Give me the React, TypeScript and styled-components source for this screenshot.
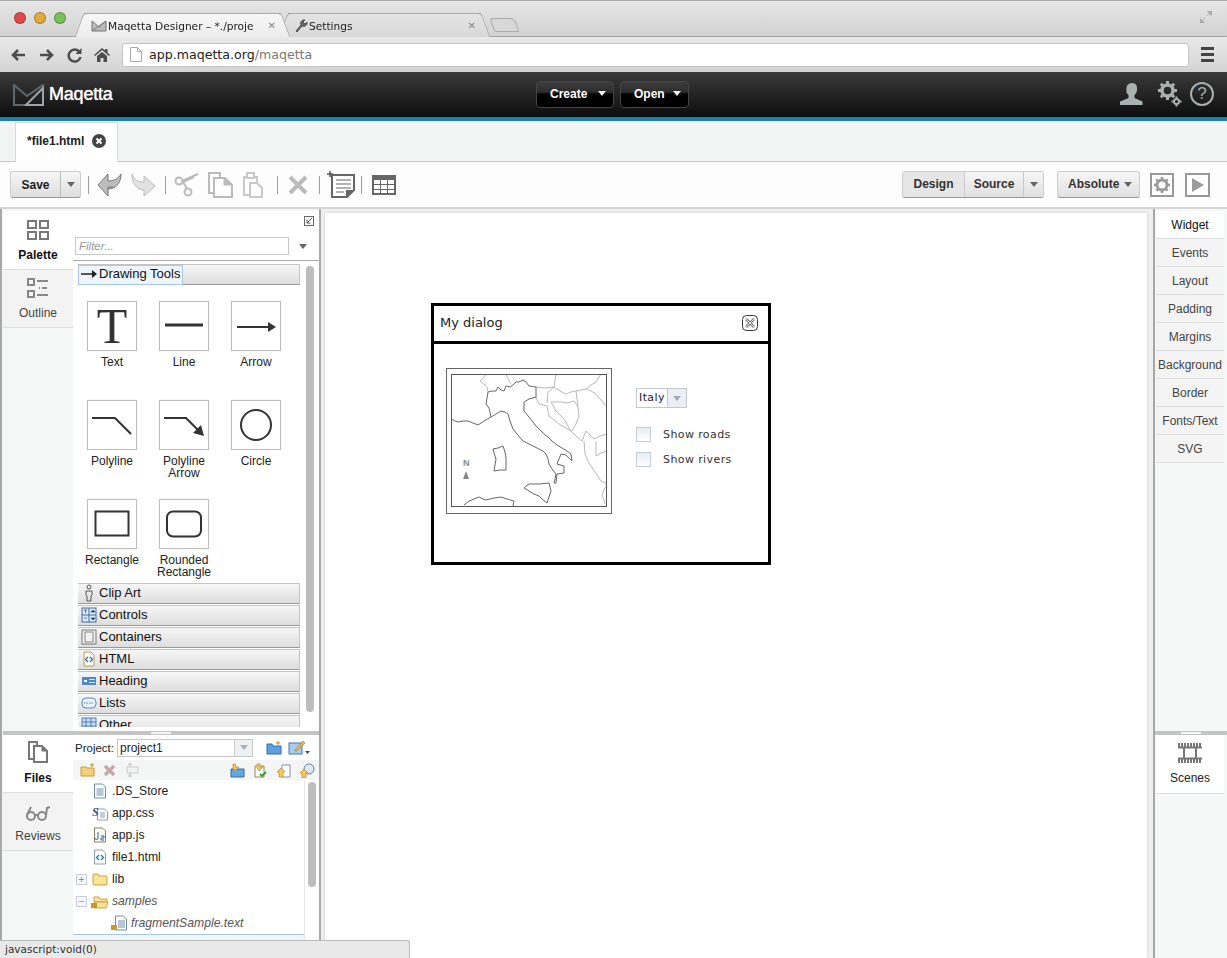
import React from "react"
import styled, { createGlobalStyle } from "styled-components"

const GlobalStyle = createGlobalStyle`
    html, body {
        margin: 0;
        padding: 0;
        overflow: hidden;
        background: #fff;
    }
    * {
        box-sizing: border-box;
    }
`

const SANS = `"Liberation Sans", Arial, sans-serif`
const LUCIDA = `"DejaVu Sans", Verdana, sans-serif`

const BigT = styled.span`
    font-family: "Liberation Serif", serif;
    font-size: 50px;
    line-height: 48px;
    color: #333;
`

const PALETTE_ITEMS: { label: string; shape: React.ReactNode }[] = [
    { label: "Text", shape: <BigT>T</BigT> },
    { label: "Line", shape: <svg width="48" height="48"><path d="M5 23H43" stroke="#333" strokeWidth="3" /></svg> },
    { label: "Arrow", shape: <svg width="48" height="48"><path d="M5 25H39" stroke="#333" strokeWidth="2" /><path d="M36 20l8 5-8 5z" fill="#333" /></svg> },
    { label: "Polyline", shape: <svg width="48" height="48"><path d="M4 17H27L43 33" stroke="#333" strokeWidth="2" fill="none" /></svg> },
    { label: "Polyline Arrow", shape: <svg width="48" height="48"><path d="M4 17H26L40 31" stroke="#333" strokeWidth="2" fill="none" /><path d="M44 35L33 32 41 24z" fill="#333" /></svg> },
    { label: "Circle", shape: <svg width="48" height="48"><circle cx="24" cy="24" r="15" stroke="#333" strokeWidth="2" fill="none" /></svg> },
    { label: "Rectangle", shape: <svg width="48" height="48"><rect x="7.5" y="11.5" width="33" height="24" stroke="#333" strokeWidth="2" fill="none" /></svg> },
    { label: "Rounded Rectangle", shape: <svg width="48" height="48"><rect x="7" y="11.5" width="34" height="25" rx="6" stroke="#333" strokeWidth="2" fill="none" /></svg> },
]

const SECTIONS: { label: string; icon: React.ReactNode }[] = [
    { label: "Clip Art", icon: <svg width="16" height="18"><circle cx="8" cy="3" r="2" fill="none" stroke="#555" /><path d="M5 7h6v4l-1 1v5H6v-5l-1-1z" fill="none" stroke="#555" /></svg> },
    { label: "Controls", icon: <svg width="16" height="16"><rect x="1" y="1" width="14" height="14" fill="#dfe8f5" stroke="#3c6aa8" /><path d="M8 1v14M1 8h14" stroke="#3c6aa8" /><path d="M3 3h3M4.5 3v3M3 11h3M10 5l2-2 2 2zM10 11h4l-2 2z" stroke="#24466f" fill="#24466f" strokeWidth=".7" /></svg> },
    { label: "Containers", icon: <svg width="16" height="16"><rect x="1" y="1" width="14" height="14" fill="#f2f2f2" stroke="#777" /><rect x="4" y="3" width="8" height="10" fill="none" stroke="#888" /></svg> },
    { label: "HTML", icon: <svg width="16" height="16"><path d="M3 1h7l3 3v11H3z" fill="#fff" stroke="#b89a45" /><path d="M7 6L4.500 8.500 7 11M9 6l2.500 2.500L9 11" stroke="#2f6fb5" fill="none" strokeWidth="1.300" /></svg> },
    { label: "Heading", icon: <svg width="16" height="16"><rect x="1" y="4" width="14" height="8" fill="#4f88c6" /><path d="M3 8h3" stroke="#fff" strokeWidth="2" /><path d="M8 6.500h6M8 9.500h6" stroke="#cfe0f2" /></svg> },
    { label: "Lists", icon: <svg width="16" height="16"><rect x="1" y="3" width="14" height="10" rx="4" fill="#eaf2fb" stroke="#5a87bb" /><path d="M3 8h10" stroke="#5a87bb" strokeDasharray="1.500 1" /></svg> },
]

const FILES: { name: string; icon: React.ReactNode }[] = [
    { name: ".DS_Store", icon: <svg width="14" height="16"><path d="M1.500 1h8l3 3v11h-11z" fill="#fff" stroke="#6e8db0" /><path d="M3.500 6h7M3.500 8h7M3.500 10h7M3.500 12h7" stroke="#6e8db0" /></svg> },
    { name: "app.css", icon: <svg width="16" height="16"><path d="M5.500 4h7l3 3v8h-10z" fill="#fff" stroke="#8a9db5" /><path d="M8 8h5M8 10h5M8 12h5" stroke="#8a9db5" /><text x="0" y="11" fontFamily="Liberation Serif, serif" fontSize="12" fontWeight="700" fontStyle="italic" fill="#2a5a96">S</text></svg> },
    { name: "app.js", icon: <svg width="14" height="16"><path d="M1.500 1h8l3 3v11h-11z" fill="#fff" stroke="#8a7f55" /><path d="M5 5v6a1.500 1.500 0 0 1-3 0M8 9h3v2H8v2h3" stroke="#2f5f9e" fill="none" /></svg> },
    { name: "file1.html", icon: <svg width="14" height="16"><path d="M1.500 1h8l3 3v11h-11z" fill="#fff" stroke="#8a9db5" /><path d="M6 6L3.500 8.500 6 11M8 6l2.500 2.500L8 11" stroke="#2f6fb5" fill="none" strokeWidth="1.300" /></svg> },
]

const PROPERTY_TABS = ["Widget", "Events", "Layout", "Padding", "Margins", "Background", "Border", "Fonts/Text", "SVG"]

const ClosedFolder = () => (
    <svg width="16" height="14"><path d="M1 3a1 1 0 0 1 1-1h4l1 2h7a1 1 0 0 1 1 1v7a1 1 0 0 1-1 1H2a1 1 0 0 1-1-1z" fill="#fbe39a" stroke="#c9a243" /></svg>
)

const Separator = styled.span<{ $gap: number }>`
    width: 1px;
    height: 18px;
    margin-left: ${(p) => p.$gap}px;
    background: #9a9a9a;
    flex: none;
`

const ToolIcon = styled.svg<{ $gap?: number }>`
    flex: none;
    margin-left: ${(p) => p.$gap ?? 0}px;
`

const Caret = ({ color = "#666" }: { color?: string }) => (
    <svg width="8" height="5"><path d="M0 0h8L4 5z" fill={color} /></svg>
)

const ItalyMap = () => (
    <svg width="154" height="131" viewBox="1 1 154 131">
        <g fill="none" stroke="#b8b8b8" strokeWidth="1">
            <path d="M35 0L32 4 29 7 33 10 36 13 37 18" />
            <path d="M55 0L57 5 60 10" />
            <path d="M85 13L94 14 103 13 105 0" />
            <path d="M103 13L109 17 115 20 120 18 125 17 130 16 135 15 140 11 145 8 150 0" />
            <path d="M135 15L140 17 145 20 150 26 156 33" />
            <path d="M103 13L97 18 96 29" />
            <path d="M85 23L88 30 92 31 96 32 98 42 108 50 120 57 125 62 131 67" />
            <path d="M100 28H111L116 29 123 27 127 33 128 42 125 50 121 57" />
            <path d="M100 28L105 37 113 45 120 57" />
            <path d="M125 17L126 25 127 33" />
            <path d="M131 67L135 57 143 65 149 62 156 60" />
            <path d="M133 67L134 80 138 89 144 98 150 107 156 110" />
            <path d="M145 67V82L150 79 156 77" />
            <path d="M156 112L153 115 151 122 153 126 154 130" />
        </g>
        <g fill="none" stroke="#666" strokeWidth="1">
            <path d="M0 45L4 47 7 48 12 47 17 47 22 49 27 51 33 47 40 43 45 40 50 37 54 38 57 40 59 47 62 55 66 60 72 67 78 70 84 73 88 75 92 77 95 80 97 85 98 90 101 95 105 100 104 105 103 109 105 109 106 100 113 99 113 92 106 90 108 85 110 80 115 81 118 84 121 87 120 80 116 77 111 74 106 71 101 67 97 63 93 60 89 56 85 52 82 48 78 43 73 37 73 28 78 25 85 23 85 13 78 12 75 8 72 6 68 8 65 8 62 11 59 13 55 12 53 17 50 16 47 13 45 17 41 17 37 18 36 24 35 30 38 34 39 38 40 43" />
            <path d="M78 110L88 110 98 109 100 117 98 123 96 129 91 125 88 122 83 120 78 117 75 115 73 114 75 112z" />
            <path d="M42 75L47 74 52 72 54 78 55 84V90L55 96 49 96 43 97 44 91 45 85 43 79z" />
            <path d="M13 131L18 127 23 125 28 123 32 125 35 126 43 124 50 123 56 125 63 127 62 132" />
        </g>
        <NorthLabel x="12" y="92">N</NorthLabel>
        <path d="M15 97l-3 8h6z" fill="#888" />
    </svg>
)

export default function App() {
    return (
        <Screen>
            <GlobalStyle />
            <BrowserTabs>
                <Lights>
                    <Light $color="#e0494a" />
                    <Light $color="#e3aa3c" />
                    <Light $color="#78c05a" />
                </Lights>
                <BrowserTab $active $width={197}>
                    <svg width="16" height="12"><path d="M1 1l7 6 7-6v10H1z" fill="#bbb" stroke="#777" /><path d="M1 11L15 1" stroke="#777" /></svg>
                    <BrowserTabTitle>Maqetta Designer – *./proje</BrowserTabTitle>
                    <BrowserTabClose>✕</BrowserTabClose>
                </BrowserTab>
                <BrowserTab $width={193}>
                    <svg width="13" height="14"><path d="M1 12L6 6a3.500 3.500 0 0 1 4-5L8 3l2 2 2-2a3.500 3.500 0 0 1-5 4l-5 6z" fill="#666" stroke="#555" /></svg>
                    <BrowserTabTitle>Settings</BrowserTabTitle>
                    <BrowserTabClose>✕</BrowserTabClose>
                </BrowserTab>
                <NewTab />
                <FullScreen>
                    <svg width="12" height="12"><path d="M7 0h5v5zM0 12V7l5 5z" fill="#aaa" /><path d="M10 2L7 5M2 10l3-3" stroke="#aaa" /></svg>
                </FullScreen>
            </BrowserTabs>
            <AddressRow>
                <svg width="17" height="16"><path d="M15 8H3M8 3L3 8l5 5" stroke="#4d4d4d" strokeWidth="2.500" fill="none" /></svg>
                <svg width="17" height="16"><path d="M2 8h12M9 3l5 5-5 5" stroke="#4d4d4d" strokeWidth="2.500" fill="none" /></svg>
                <svg width="17" height="16"><path d="M13.500 5A6 6 0 1 0 14.500 10" stroke="#4d4d4d" strokeWidth="2.500" fill="none" /><path d="M15.500 1v6h-6z" fill="#4d4d4d" /></svg>
                <svg width="17" height="16"><path d="M0 8l8-7 3 2.600V2h2.500v3.800L16 8l-1 1-7-6-7 6z" fill="#4d4d4d" /><path d="M3 9l5-4 5 4v6H9.500v-4h-3v4H3z" fill="#4d4d4d" /></svg>
                <UrlBar>
                    <svg width="12" height="15"><path d="M.5.500h7l4 4v10H.5z" fill="#fff" stroke="#aaa" /><path d="M7.500.500v4h4" fill="none" stroke="#aaa" /></svg>
                    <UrlHost>app.maqetta.org</UrlHost>
                    <UrlPath>/maqetta</UrlPath>
                </UrlBar>
                <MenuBars>
                    <span />
                    <span />
                    <span />
                </MenuBars>
            </AddressRow>
            <AppHeader>
                <Logo>
                    <svg width="32" height="22">
                        <path d="M1 1L14 12 30 1V21H1z" fill="none" stroke="#5d686e" strokeWidth="2" />
                        <path d="M13 21L30 4v17z" fill="none" stroke="#9aa5aa" strokeWidth="2" />
                    </svg>
                    <LogoText>Maqetta</LogoText>
                </Logo>
                <HeaderCenter>
                    <HeaderButton $width={78}>Create<Caret color="#eee" /></HeaderButton>
                    <HeaderButton $width={69}>Open<Caret color="#eee" /></HeaderButton>
                </HeaderCenter>
                <HeaderIcons>
                    <UserIcon width="26" height="24"><path d="M13 1c4 0 5.500 3 5 7-.3 2-1 4-2.500 5v3l8 3.500V23H1v-3.500L9.500 16v-3C8 12 7 10 7.500 8 7 4 9 1 13 1z" fill="#a9b2b0" /></UserIcon>
                    <svg width="24" height="26">
                        <g fill="none" stroke="#a9b0ae">
                            <circle cx="9.500" cy="9.500" r="5.500" strokeWidth="3.500" />
                            <path d="M9.500 0v3.500M9.500 15.500V19M0 9.500h3.500M15.500 9.500H19M2.800 2.800l2.500 2.500M13.700 13.700l2.500 2.500M2.800 16.200l2.500-2.500M13.700 5.300l2.500-2.500" strokeWidth="3" />
                            <circle cx="18.500" cy="20.500" r="2.500" strokeWidth="2" />
                            <path d="M18.500 15.500v2M18.500 23.500v2M13.500 20.500h2M21.500 20.500h2" strokeWidth="2" />
                        </g>
                    </svg>
                    <HelpCircle>?</HelpCircle>
                </HeaderIcons>
            </AppHeader>
            <BlueRule />
            <EditorTabs>
                <EditorTab>
                    *file1.html
                    <CloseDot>
                        <svg width="14" height="14"><circle cx="7" cy="7" r="7" fill="#444" /><path d="M4.500 4.500l5 5M9.500 4.500l-5 5" stroke="#fff" strokeWidth="2" /></svg>
                    </CloseDot>
                </EditorTab>
            </EditorTabs>
            <Toolbar>
                <ToolbarLeft>
                    <SplitButton>
                        <SaveLabel>Save</SaveLabel>
                        <CaretCell><Caret /></CaretCell>
                    </SplitButton>
                    <Separator $gap={7} />
                    <ToolIcon width="25" height="26" viewBox="0 0 25 26" $gap={8}>
                        <path d="M11 2L1 13l10 11v-7c7 0 13-5 13-15-3 5-7 7-13 7z" fill="#bdbdbd" stroke="#777" />
                        <path d="M11 24v-7c3 0 5-1 7-2l-5-1-3 1z" fill="#8f8f8f" />
                    </ToolIcon>
                    <ToolIcon width="25" height="26" viewBox="0 0 25 26" $gap={9}>
                        <path d="M1 2c2 6 6 8 12 8V4l11 10-11 10v-6C6 18 1 12 1 2z" fill="#e2e2e2" stroke="#bbb" />
                    </ToolIcon>
                    <Separator $gap={9} />
                    <ToolIcon width="25" height="27" viewBox="0 0 25 27" $gap={8}>
                        <g fill="none" stroke="#bbb" strokeWidth="2">
                            <circle cx="5" cy="10" r="3.500" />
                            <circle cx="14" cy="21" r="3.500" />
                            <path d="M8 10L24 3M13 18L9 11 20 6" />
                        </g>
                    </ToolIcon>
                    <ToolIcon width="25" height="27" viewBox="0 0 25 27" $gap={9}>
                        <g fill="#fff" stroke="#bbb" strokeWidth="2">
                            <path d="M1 2h11v20H1z" />
                            <path d="M6 7h11l7 7v12H6z" />
                        </g>
                        <path d="M16 7v7h8" fill="#bbb" stroke="#bbb" />
                    </ToolIcon>
                    <ToolIcon width="20" height="27" viewBox="0 0 20 27" $gap={10}>
                        <g fill="#fff" stroke="#c8c8c8" strokeWidth="2">
                            <path d="M1 6h13v18H1z" />
                            <path d="M4 2h7v5H4z" />
                            <path d="M7 12h7l5 5v9H7z" />
                        </g>
                    </ToolIcon>
                    <Separator $gap={14} />
                    <ToolIcon width="20" height="20" viewBox="0 0 20 20" $gap={10}>
                        <path d="M2 2l16 16M18 2L2 18" stroke="#bbb" strokeWidth="4" />
                    </ToolIcon>
                    <Separator $gap={11} />
                    <ToolIcon width="28" height="28" viewBox="0 0 28 28" $gap={7}>
                        <path d="M3 6v-6M0 3h6" stroke="#555" strokeWidth="1.500" />
                        <path d="M5 4h22v15l-7 7H5z" fill="#fff" stroke="#666" strokeWidth="2" />
                        <path d="M9 9h15M9 13h15M9 17h15M9 21h8" stroke="#666" />
                        <path d="M19 26v-7h8z" fill="#666" />
                    </ToolIcon>
                    <Separator $gap={6} />
                    <ToolIcon width="24" height="20" viewBox="0 0 24 20" $gap={10}>
                        <rect x="1" y="1" width="22" height="18" fill="#fff" stroke="#666" strokeWidth="2" />
                        <path d="M1 3h22M1 4h22" stroke="#666" strokeWidth="2" />
                        <path d="M1 9.500h22M1 14.500h22M8.500 2v16M15.500 2v16" stroke="#666" />
                    </ToolIcon>
                </ToolbarLeft>
                <ToolbarRight>
                    <ButtonGroup>
                        <GroupButton $active $width={61}>Design</GroupButton>
                        <GroupButton $width={59}>Source</GroupButton>
                        <GroupButton $width={20}><Caret /></GroupButton>
                    </ButtonGroup>
                    <AbsoluteButton>Absolute<Caret /></AbsoluteButton>
                    <BoxIcon $width={24}>
                        <svg width="16" height="16"><circle cx="8" cy="8" r="5" fill="none" stroke="#9a9a9a" strokeWidth="3" /><path d="M8 0v3M8 13v3M0 8h3M13 8h3M2.300 2.300l2 2M11.700 11.700l2 2M2.300 13.700l2-2M11.700 4.300l2-2" stroke="#9a9a9a" strokeWidth="2.500" /></svg>
                    </BoxIcon>
                    <BoxIcon $width={25} $gapLeft={11}>
                        <svg width="14" height="16"><path d="M1 1l12 7-12 7z" fill="#9a9a9a" /></svg>
                    </BoxIcon>
                </ToolbarRight>
            </Toolbar>
            <Workspace>
                <LeftColumn>
                    <PalettePane>
                        <SideTabs>
                            <SideTab $active $height={59}>
                                <svg width="22" height="20"><g fill="none" stroke="#777" strokeWidth="2"><rect x="1" y="1" width="8" height="7" /><rect x="13" y="1" width="8" height="7" /><rect x="1" y="12" width="8" height="7" /><rect x="13" y="12" width="8" height="7" /></g></svg>
                                Palette
                            </SideTab>
                            <SideTab $height={58}>
                                <svg width="22" height="20"><g fill="none" stroke="#888" strokeWidth="2"><rect x="1" y="1" width="6" height="6" /><rect x="1" y="13" width="6" height="6" /></g><path d="M10 3h11M12 10h1M15 10h5M10 17h11" stroke="#888" strokeWidth="2" /></svg>
                                Outline
                            </SideTab>
                        </SideTabs>
                        <PaletteBody>
                            <PaletteTop>
                                <svg width="10" height="10"><rect x=".5" y=".5" width="9" height="9" fill="#fff" stroke="#666" /><path d="M8 2L3 7M3 3.500V7h3.500" stroke="#555" fill="none" /></svg>
                            </PaletteTop>
                            <FilterRow>
                                <FilterInput>Filter...</FilterInput>
                                <Caret />
                            </FilterRow>
                            <PaletteScroll>
                                <PaletteList>
                                    <SectionHeader>
                                        <SectionFocus>
                                            <svg width="18" height="12"><path d="M1 6h13" stroke="#222" strokeWidth="1.500" /><path d="M12 2l5 4-5 4z" fill="#222" /></svg>
                                            Drawing Tools
                                        </SectionFocus>
                                    </SectionHeader>
                                    <ItemGrid>
                                        {PALETTE_ITEMS.map((item) => (
                                            <Item key={item.label}>
                                                <ItemBox>{item.shape}</ItemBox>
                                                <ItemLabel>{item.label}</ItemLabel>
                                            </Item>
                                        ))}
                                    </ItemGrid>
                                    {SECTIONS.map((section) => (
                                        <SectionHeader key={section.label}>
                                            <SectionIcon>{section.icon}</SectionIcon>
                                            {section.label}
                                        </SectionHeader>
                                    ))}
                                    <SectionHeader>
                                        <SectionIcon>
                                            <svg width="16" height="16"><rect x="1" y="1" width="14" height="14" fill="#cddff2" stroke="#4f7fb5" /><path d="M1 5h14M1 9h14M5 1v14M10 1v14" stroke="#4f7fb5" /></svg>
                                        </SectionIcon>
                                        Other
                                    </SectionHeader>
                                </PaletteList>
                                <ScrollTrack $gap={6}>
                                    <ScrollThumb $height={446} />
                                </ScrollTrack>
                            </PaletteScroll>
                        </PaletteBody>
                    </PalettePane>
                    <Splitter><SplitterGrip /></Splitter>
                    <FilesPane>
                        <SideTabs>
                            <SideTab $active $height={58}>
                                <svg width="22" height="22"><path d="M2 1h8v17H2z" fill="none" stroke="#777" strokeWidth="2" /><path d="M7 5h8l5 5v11H7z" fill="#fff" stroke="#777" strokeWidth="2" /><path d="M15 5v5h5" fill="#777" stroke="#777" /></svg>
                                Files
                            </SideTab>
                            <SideTab $height={58}>
                                <svg width="26" height="16"><g fill="none" stroke="#888" strokeWidth="2"><circle cx="6" cy="11" r="4" /><circle cx="17" cy="11" r="4" /><path d="M10 10h3M2 10L6 2M21 10l1-7 3-1" /></g></svg>
                                Reviews
                            </SideTab>
                        </SideTabs>
                        <FilesBody>
                            <ProjectRow>
                                Project:
                                <ProjectSelect>
                                    <ProjectValue>project1</ProjectValue>
                                    <ProjectCaret><Caret color="#9db4d0" /></ProjectCaret>
                                </ProjectSelect>
                                <ProjectActions>
                                    <svg width="16" height="14"><path d="M1 3h5l1 2h8v8H1z" fill="#5f9fe0" stroke="#2f6cb0" /><path d="M12 0v4M10 2h4" stroke="#c98a2b" /></svg>
                                    <svg width="22" height="15"><rect x="1" y="3" width="13" height="11" fill="#a8cdf0" stroke="#3f78b5" /><path d="M7 10L15 1l2 2-8 8-2 0z" fill="#e8b64a" stroke="#a07a20" strokeWidth=".6" /><path d="M17 11h5l-2.500 3z" fill="#3a4f6a" /></svg>
                                </ProjectActions>
                            </ProjectRow>
                            <ActionRow>
                                <ActionGroup>
                                    <svg width="15" height="14"><path d="M1 4h5l1 1h7v8H1z" fill="#f6cf7a" stroke="#c99a3a" /><path d="M12 0v4M10 2h4" stroke="#d88a20" /></svg>
                                    <svg width="13" height="13"><path d="M2 2l9 9M11 2l-9 9" stroke="#c9a8a8" strokeWidth="3.500" /></svg>
                                    <svg width="15" height="14"><path d="M6 1v12M4 1h4M4 13h4" stroke="#bbb" /><rect x="3" y="4" width="11" height="6" fill="#f2f2f2" stroke="#ccc" /></svg>
                                </ActionGroup>
                                <ActionGroup>
                                    <svg width="15" height="15"><path d="M1 6h13v8H1z" fill="#6aa5e0" stroke="#2f6cb0" /><path d="M3 1h2.500v3H9L5 8 3 5z" fill="#f3c95f" stroke="#b98a20" strokeWidth=".7" /></svg>
                                    <svg width="15" height="15"><path d="M2 3h9v11H2z" fill="#fff" stroke="#998a55" /><path d="M4 1h3v3h3L6 8 4 5z" fill="#f3c95f" stroke="#b98a20" strokeWidth=".7" /><path d="M7 11l2 2 4-4" stroke="#2e9a3a" fill="none" strokeWidth="1.800" /></svg>
                                    <svg width="15" height="15"><path d="M6 2h8v12H6z" fill="#fff" stroke="#7d93b3" /><path d="M1 9l4-4 4 4H7v5H3V9z" fill="#f3c95f" stroke="#b98a20" strokeWidth=".7" /></svg>
                                    <svg width="16" height="15"><circle cx="10" cy="6" r="5" fill="#dfe9f5" stroke="#5f7fa8" /><path d="M1 10l4-4 4 4H7v5H3v-5z" fill="#f3c95f" stroke="#b98a20" strokeWidth=".7" /></svg>
                                </ActionGroup>
                            </ActionRow>
                            <TreeArea>
                                <TreeList>
                                    {FILES.map((file) => (
                                        <TreeRow key={file.name} $indent={16}>
                                            <TreeIcon>{file.icon}</TreeIcon>
                                            {file.name}
                                        </TreeRow>
                                    ))}
                                    <TreeRow $indent={0}>
                                        <Expander>+</Expander>
                                        <TreeIcon><ClosedFolder /></TreeIcon>
                                        lib
                                    </TreeRow>
                                    <TreeRow $indent={0} $muted>
                                        <Expander>−</Expander>
                                        <TreeIcon>
                                            <svg width="18" height="15"><path d="M3 3h5l1 2h7v3H3z" fill="#fbe39a" stroke="#c9a243" /><path d="M4 8h13l-2 6H3z" fill="#fbe39a" stroke="#c9a243" /><rect x="0" y="9" width="6" height="5" fill="#c9982a" /></svg>
                                        </TreeIcon>
                                        samples
                                    </TreeRow>
                                    <TreeRow $indent={35} $muted>
                                        <TreeIcon>
                                            <svg width="17" height="16"><path d="M4.500 1h8l3 3v11h-11z" fill="#fff" stroke="#6e8db0" /><path d="M7 6h7M7 8h7M7 10h7M7 12h7" stroke="#6e8db0" /><rect x="0" y="10" width="6" height="5" fill="#c9982a" /></svg>
                                        </TreeIcon>
                                        fragmentSample.text
                                    </TreeRow>
                                    <SelectedRow />
                                </TreeList>
                                <ScrollTrack $gap={3}>
                                    <ScrollThumb $height={105} />
                                </ScrollTrack>
                            </TreeArea>
                        </FilesBody>
                    </FilesPane>
                </LeftColumn>
                <CanvasGutter>
                    <Canvas>
                        <Dialog>
                            <DialogTitle>
                                My dialog
                                <svg width="16" height="16"><rect x=".5" y=".5" width="15" height="15" rx="4" fill="#fff" stroke="#333" /><path d="M4 4l8 8M12 4l-8 8" stroke="#777" strokeWidth="2.500" /><path d="M4 4l8 8M12 4l-8 8" stroke="#fff" strokeWidth=".8" /></svg>
                            </DialogTitle>
                            <DialogBody>
                                <MapFrame>
                                    <MapInner>
                                        <ItalyMap />
                                    </MapInner>
                                </MapFrame>
                                <DialogControls>
                                    <ComboBox>
                                        <ComboValue>Italy</ComboValue>
                                        <ComboArrow><Caret color="#a0a8c0" /></ComboArrow>
                                    </ComboBox>
                                    <CheckRow>
                                        <CheckBox />
                                        Show roads
                                    </CheckRow>
                                    <CheckRow>
                                        <CheckBox />
                                        Show rivers
                                    </CheckRow>
                                </DialogControls>
                            </DialogBody>
                        </Dialog>
                    </Canvas>
                </CanvasGutter>
                <RightColumn>
                    <PropertyPane>
                        {PROPERTY_TABS.map((label, i) => (
                            <PropertyTab key={label} $active={i === 0}>{label}</PropertyTab>
                        ))}
                    </PropertyPane>
                    <Splitter><SplitterGrip /></Splitter>
                    <ScenesPane>
                        <ScenesTab>
                            <svg width="24" height="20"><path d="M0 2h24M0 18h24" stroke="#777" strokeWidth="4" strokeDasharray="2 1" /><path d="M0 4.500h24M0 15.500h24M6 5v10M18 5v10" stroke="#777" strokeWidth="2" /></svg>
                            Scenes
                        </ScenesTab>
                    </ScenesPane>
                </RightColumn>
            </Workspace>
            <StatusBubble>javascript:void(0)</StatusBubble>
        </Screen>
    )
}

const Screen = styled.div`
    position: relative;
    width: 1227px;
    height: 958px;
    overflow: hidden;
    display: flex;
    flex-direction: column;
    font-family: ${SANS};
    background: #fff;
`

const BrowserTabs = styled.div`
    height: 37px;
    flex: none;
    display: flex;
    align-items: flex-end;
    padding: 0 15px 0 14px;
    background: linear-gradient(#e6e6e6, #d2d2d2);
    border-top: 1px solid #aaa;
    border-bottom: 1px solid #a4a4a4;
`

const Lights = styled.div`
    display: flex;
    gap: 8px;
    align-self: center;
    margin-right: 11px;
    margin-top: -2px;
`

const Light = styled.span<{ $color: string }>`
    width: 12px;
    height: 12px;
    border-radius: 50%;
    background: ${(p) => p.$color};
    border: 1px solid rgba(0, 0, 0, 0.25);
`

const BrowserTab = styled.div<{ $active?: boolean; $width: number }>`
    position: relative;
    z-index: ${(p) => (p.$active ? 2 : 1)};
    width: ${(p) => p.$width}px;
    height: 24px;
    flex: none;
    display: flex;
    align-items: center;
    gap: 1px;
    padding: 0 5px 0 7px;
    margin-left: 7px;
    margin-bottom: -1px;
    border-top: 1px solid #a8a8a8;
    background: ${(p) => (p.$active ? "linear-gradient(#f7f7f7, #ececec)" : "linear-gradient(#e4e4e4, #d8d8d8)")};
    font-family: ${LUCIDA};
    font-size: 10.6px;
    color: #222;

    &::before,
    &::after {
        content: "";
        position: absolute;
        z-index: -1;
        top: -1px;
        bottom: 0;
        width: 18px;
        border-top: 1px solid #a8a8a8;
        background: inherit;
    }
    &::before {
        left: -5px;
        border-left: 1px solid #a8a8a8;
        border-top-left-radius: 4px;
        transform: skewX(-20deg);
    }
    &::after {
        right: -5px;
        border-right: 1px solid #a8a8a8;
        border-top-right-radius: 4px;
        transform: skewX(20deg);
    }
`

const BrowserTabTitle = styled.span`
    flex: 1;
    overflow: hidden;
    white-space: nowrap;
    mask-image: linear-gradient(to right, #000 92%, transparent);
`

const BrowserTabClose = styled.span`
    font-size: 10px;
    color: #888;
`

const NewTab = styled.div`
    width: 25px;
    height: 14px;
    margin: 0 0 4px 11px;
    border: 1px solid #aaa;
    border-radius: 3px 5px 2px 2px;
    transform: skewX(20deg);
    background: #d8d8d8;
`

const FullScreen = styled.div`
    margin-left: auto;
    align-self: center;
    margin-top: -2px;
`

const AddressRow = styled.div`
    height: 35px;
    flex: none;
    display: flex;
    align-items: center;
    gap: 11px;
    padding: 0 13px 0 10px;
    background: linear-gradient(#e9e9e9, #d4d4d4);
`

const UrlBar = styled.div`
    flex: 1;
    height: 24px;
    display: flex;
    align-items: center;
    padding-left: 7px;
    margin-right: 1px;
    background: #fff;
    border: 1px solid #c4c4c4;
    border-radius: 3px;
    font-family: ${LUCIDA};
    font-size: 12.6px;
    svg {
        margin-right: 7px;
    }
`

const UrlHost = styled.span`
    color: #222;
`

const UrlPath = styled.span`
    color: #777;
`

const MenuBars = styled.div`
    display: flex;
    flex-direction: column;
    gap: 3px;
    span {
        width: 13px;
        height: 3px;
        background: #444;
    }
`

const AppHeader = styled.div`
    height: 45px;
    flex: none;
    display: flex;
    align-items: center;
    padding: 0 13px;
    background: linear-gradient(#3a3a3a, #0d0d0d);
`

const Logo = styled.div`
    width: 523px;
    display: flex;
    align-items: center;
    gap: 4px;
`

const LogoText = styled.span`
    color: #fff;
    font-size: 18px;
    letter-spacing: -0.2px;
    text-shadow: 0 0 1px #fff;
`

const HeaderCenter = styled.div`
    display: flex;
    gap: 6px;
`

const HeaderButton = styled.div<{ $width: number }>`
    width: ${(p) => p.$width}px;
    height: 27px;
    display: flex;
    align-items: center;
    justify-content: space-between;
    padding: 0 7px 2px 13px;
    border-radius: 4px;
    border: 1px solid #444;
    background: linear-gradient(#3c3c3c, #2d2d2d 40%, #000 50%, #000);
    color: #fff;
    font-size: 12px;
    font-weight: 700;
`

const HeaderIcons = styled.div`
    margin-left: auto;
    margin-top: -2px;
    display: flex;
    align-items: center;
    gap: 8px;
`

const UserIcon = styled.svg`
    margin-right: 5px;
`

const HelpCircle = styled.span`
    width: 24px;
    height: 24px;
    border: 2px solid #a9b0ae;
    border-radius: 50%;
    display: flex;
    align-items: center;
    justify-content: center;
    color: #a9b0ae;
    font-size: 17px;
`

const BlueRule = styled.div`
    height: 4px;
    flex: none;
    background: #1a80ac;
`

const EditorTabs = styled.div`
    height: 41px;
    flex: none;
    padding: 1px 0 0 15px;
    background: #f2f4f3;
    border-bottom: 1px solid #c9c9c9;
`

const EditorTab = styled.div`
    width: 103px;
    height: 40px;
    display: flex;
    align-items: center;
    padding: 0 0 4px 11px;
    background: #fff;
    border: 1px solid #d8d8d8;
    border-bottom: none;
    font-size: 12px;
    font-weight: 700;
    color: #222;
`

const CloseDot = styled.span`
    display: flex;
    margin-left: 8px;
`

const Toolbar = styled.div`
    height: 47px;
    flex: none;
    display: flex;
    align-items: center;
    justify-content: space-between;
    padding: 0 17px 0 10px;
    background: #fdfdfd;
    border-bottom: 2px solid #d4d4d4;
`

const ToolbarLeft = styled.div`
    display: flex;
    align-items: center;
`

const ToolbarRight = styled.div`
    display: flex;
    align-items: center;
    margin-top: -1px;
`

const SplitButton = styled.div`
    width: 71px;
    height: 27px;
    display: flex;
    border: 1px solid #ccc;
    border-bottom-color: #999;
    border-radius: 3px;
    background: linear-gradient(#f6f6f6, #dedede);
    font-size: 12px;
    font-weight: 700;
    color: #222;
`

const SaveLabel = styled.span`
    flex: 1;
    display: flex;
    align-items: center;
    justify-content: center;
`

const CaretCell = styled.span`
    width: 20px;
    display: flex;
    align-items: center;
    justify-content: center;
    border-left: 1px solid #bbb;
`

const ButtonGroup = styled.div`
    display: flex;
    height: 27px;
    border: 1px solid #ccc;
    border-bottom-color: #999;
    border-radius: 3px;
    overflow: hidden;
`

const GroupButton = styled.div<{ $active?: boolean; $width: number }>`
    width: ${(p) => p.$width}px;
    display: flex;
    align-items: center;
    justify-content: center;
    font-size: 12px;
    font-weight: 700;
    color: #333;
    background: ${(p) => (p.$active ? "#e6e6e6" : "linear-gradient(#f6f6f6, #e0e0e0)")};
    border-left: ${(p) => (p.$active ? "none" : "1px solid #c8c8c8")};
`

const AbsoluteButton = styled.div`
    width: 83px;
    height: 27px;
    margin-left: 13px;
    display: flex;
    align-items: center;
    justify-content: space-between;
    padding: 0 7px 0 10px;
    border: 1px solid #ccc;
    border-bottom-color: #999;
    border-radius: 3px;
    background: linear-gradient(#f6f6f6, #e0e0e0);
    font-size: 12px;
    font-weight: 700;
    color: #333;
`

const BoxIcon = styled.div<{ $gapLeft?: number; $width: number }>`
    width: ${(p) => p.$width}px;
    height: 24px;
    margin-left: ${(p) => p.$gapLeft ?? 10}px;
    margin-top: 2px;
    display: flex;
    align-items: center;
    justify-content: center;
    border: 2px solid #999;
    background: #fff;
`

const Workspace = styled.div`
    flex: 1;
    min-height: 0;
    display: flex;
`

const LeftColumn = styled.div`
    width: 321px;
    flex: none;
    display: flex;
    flex-direction: column;
    padding-left: 1px;
    background: #f5f6f6;
    border-left: 2px solid #a8a8a8;
    border-right: 2px solid #a8a8a8;
`

const PalettePane = styled.div`
    height: 520px;
    flex: none;
    margin-top: 2px;
    display: flex;
    overflow: hidden;
`

const FilesPane = styled.div`
    flex: 1;
    min-height: 0;
    display: flex;
    overflow: hidden;
`

const SideTabs = styled.div`
    width: 70px;
    flex: none;
    display: flex;
    flex-direction: column;
`

const SideTab = styled.div<{ $active?: boolean; $height: number }>`
    height: ${(p) => p.$height}px;
    display: flex;
    flex-direction: column;
    align-items: center;
    justify-content: flex-end;
    gap: 8px;
    padding-bottom: 7px;
    background: ${(p) => (p.$active ? "#fff" : "#f3f3f3")};
    border-bottom: 1px solid #dcdcdc;
    font-size: 12px;
    font-weight: ${(p) => (p.$active ? 700 : 400)};
    color: ${(p) => (p.$active ? "#111" : "#444")};
`

const PaletteBody = styled.div`
    flex: 1;
    min-width: 0;
    display: flex;
    flex-direction: column;
    background: #fff;
`

const PaletteTop = styled.div`
    height: 26px;
    flex: none;
    display: flex;
    justify-content: flex-end;
    padding: 5px 5px 0 0;
`

const FilterRow = styled.div`
    height: 24px;
    flex: none;
    display: flex;
    align-items: center;
    gap: 10px;
    padding: 0 0 5px 2px;
    border-bottom: 1px solid #aaa;
`

const FilterInput = styled.div`
    width: 214px;
    height: 18px;
    padding-left: 3px;
    border: 1px solid #c8c8c8;
    font-size: 11.5px;
    line-height: 16px;
    font-style: italic;
    color: #999;
    background: #fff;
`

const PaletteScroll = styled.div`
    flex: 1;
    min-height: 0;
    display: flex;
    padding: 3px 0 4px 5px;
    overflow: hidden;
`

const PaletteList = styled.div`
    width: 222px;
    flex: none;
    overflow: hidden;
`

const SectionHeader = styled.div`
    height: 21px;
    margin-bottom: 1px;
    padding-bottom: 2px;
    display: flex;
    flex: none;
    align-items: center;
    border: 1px solid #c4c4c4;
    border-bottom-color: #999;
    border-left: none;
    background: linear-gradient(#f6f6f6, #dedede);
    font-size: 13px;
    color: #111;
`

const SectionFocus = styled.div`
    height: 20px;
    margin-bottom: -2px;
    padding: 0 2px 2px 1px;
    display: flex;
    align-items: center;
    gap: 1px;
    background: #eef4fb;
    border: 1px solid #a9c8ea;
`

const SectionIcon = styled.span`
    width: 21px;
    flex: none;
    display: flex;
    justify-content: center;
`

const ItemGrid = styled.div`
    display: grid;
    grid-template-columns: repeat(3, 72px);
    grid-template-rows: 99px 99px 84px;
    margin-left: -2px;
    padding-top: 15px;
`

const Item = styled.div`
    display: flex;
    flex-direction: column;
    align-items: center;
`

const ItemBox = styled.div`
    width: 50px;
    height: 50px;
    display: flex;
    align-items: center;
    justify-content: center;
    background: #fff;
    border: 1px solid #bdbdbd;
    box-shadow: 0 0 1px #ddd;
`

const ItemLabel = styled.div`
    width: 72px;
    margin-top: 5px;
    text-align: center;
    font-size: 12px;
    line-height: 12px;
    color: #222;
`

const ScrollTrack = styled.div<{ $gap: number }>`
    width: 9px;
    flex: none;
    margin-left: ${(p) => p.$gap}px;
`

const ScrollThumb = styled.div<{ $height: number }>`
    width: 8px;
    height: ${(p) => p.$height}px;
    margin-top: 2px;
    border-radius: 4px;
    background: #bdbdbd;
`

const Splitter = styled.div`
    height: 4px;
    flex: none;
    display: flex;
    justify-content: center;
    background: #c4c4c4;
`

const SplitterGrip = styled.span`
    width: 20px;
    height: 2px;
    margin-top: 1px;
    background: #f4f4f4;
`

const FilesBody = styled.div`
    flex: 1;
    min-width: 0;
    display: flex;
    flex-direction: column;
    background: #fff;
`

const ProjectRow = styled.div`
    height: 25px;
    flex: none;
    display: flex;
    align-items: center;
    gap: 3px;
    padding-left: 2px;
    font-size: 11.5px;
    color: #222;
`

const ProjectSelect = styled.div`
    width: 136px;
    height: 18px;
    display: flex;
    border: 1px solid #c8c8c8;
`

const ProjectValue = styled.span`
    flex: 1;
    padding-left: 2px;
    line-height: 16px;
    font-size: 12px;
`

const ProjectCaret = styled.span`
    width: 18px;
    display: flex;
    align-items: center;
    justify-content: center;
    background: #eef0f2;
    border-left: 1px solid #ccc;
`

const ProjectActions = styled.div`
    display: flex;
    align-items: center;
    gap: 6px;
    margin-left: 10px;
`

const ActionRow = styled.div`
    height: 20px;
    flex: none;
    display: flex;
    align-items: center;
    justify-content: space-between;
    padding: 0 4px 0 7px;
    background: #f4f5f5;
`

const ActionGroup = styled.div`
    display: flex;
    align-items: center;
    gap: 8px;
`

const TreeArea = styled.div`
    flex: 1;
    min-height: 0;
    display: flex;
    overflow: hidden;
`

const TreeList = styled.div`
    width: 232px;
    flex: none;
    border-right: 1px solid #e8e8e8;
`

const TreeRow = styled.div<{ $indent: number; $muted?: boolean }>`
    height: 22px;
    display: flex;
    align-items: center;
    padding-left: ${(p) => p.$indent + 2}px;
    font-size: 12.2px;
    font-style: ${(p) => (p.$muted ? "italic" : "normal")};
    color: ${(p) => (p.$muted ? "#555" : "#222")};
`

const TreeIcon = styled.span`
    width: 18px;
    margin-right: 3px;
    flex: none;
    display: flex;
    justify-content: center;
`

const Expander = styled.span`
    width: 11px;
    height: 11px;
    margin: 0 4px 0 1px;
    display: flex;
    align-items: center;
    justify-content: center;
    border: 1px solid #ccd;
    background: #f4f6fa;
    font-size: 10px;
    font-style: normal;
    color: #889;
`

const SelectedRow = styled.div`
    height: 22px;
    background: #eef6fc;
    border-top: 1px solid #a8c6de;
`

const CanvasGutter = styled.div`
    flex: 1;
    min-width: 0;
    padding: 4px 6px 0 4px;
    background: #f0f0f0;
`

const Canvas = styled.div`
    height: 100%;
    padding: 90px 0 0 106px;
    background: #fff;
    box-shadow: 0 0 3px #ccc;
`

const Dialog = styled.div`
    width: 340px;
    height: 262px;
    background: #fff;
    border: 3px solid #000;
    font-family: ${LUCIDA};
`

const DialogTitle = styled.div`
    height: 38px;
    display: flex;
    align-items: center;
    justify-content: space-between;
    padding: 0 10px 2px 6px;
    border-bottom: 3px solid #000;
    font-size: 13px;
    color: #222;
`

const DialogBody = styled.div`
    display: flex;
    padding: 24px 0 0 12px;
`

const MapFrame = styled.div`
    width: 166px;
    height: 146px;
    padding: 5px 4px;
    border: 1px solid #666;
`

const MapInner = styled.div`
    width: 156px;
    height: 133px;
    border: 1px solid #555;
    display: flex;
`

const NorthLabel = styled.text`
    font-family: ${SANS};
    font-size: 9px;
    font-weight: 700;
    fill: #888;
`

const DialogControls = styled.div`
    margin-left: 24px;
    padding-top: 20px;
`

const ComboBox = styled.div`
    width: 51px;
    height: 20px;
    display: flex;
    border: 1px solid #c0c8d4;
    font-size: 11px;
    letter-spacing: 0.4px;
    color: #222;
    margin-bottom: 18px;
`

const ComboValue = styled.span`
    flex: 1;
    padding-left: 2px;
    line-height: 18px;
`

const ComboArrow = styled.span`
    width: 19px;
    display: flex;
    align-items: center;
    justify-content: center;
    background: #eceef2;
    border-left: 1px solid #c0c8d4;
`

const CheckRow = styled.div`
    height: 25px;
    display: flex;
    align-items: center;
    gap: 12px;
    padding-bottom: 8px;
    font-size: 11px;
    letter-spacing: 0.4px;
    color: #333;
`

const CheckBox = styled.span`
    width: 15px;
    height: 15px;
    flex: none;
    border: 1px solid #c4ccd6;
    background: linear-gradient(#e6ecf4, #fff);
`

const RightColumn = styled.div`
    width: 74px;
    flex: none;
    display: flex;
    flex-direction: column;
    background: #f6f7f7;
    border-left: 2px solid #a8a8a8;
`

const PropertyPane = styled.div`
    height: 522px;
    flex: none;
    padding: 2px 3px 0 1px;
`

const PropertyTab = styled.div<{ $active?: boolean }>`
    height: 28px;
    display: flex;
    align-items: center;
    justify-content: center;
    border-bottom: 1px solid #dedede;
    background: ${(p) => (p.$active ? "#fff" : "#f4f4f4")};
    font-size: 12px;
    white-space: nowrap;
    color: ${(p) => (p.$active ? "#111" : "#444")};
`

const ScenesPane = styled.div`
    flex: 1;
    padding: 0 3px 0 1px;
`

const ScenesTab = styled.div`
    height: 59px;
    display: flex;
    flex-direction: column;
    align-items: center;
    justify-content: flex-end;
    gap: 8px;
    padding-bottom: 8px;
    background: #fff;
    border-bottom: 1px solid #dedede;
    font-size: 12px;
    color: #222;
`

const StatusBubble = styled.div`
    position: absolute;
    left: 0;
    bottom: 0;
    width: 410px;
    height: 18px;
    padding-left: 5px;
    background: #e9e9e9;
    border: 1px solid #bbb;
    border-left: none;
    border-bottom: none;
    border-top-right-radius: 3px;
    font-family: ${LUCIDA};
    font-size: 10.5px;
    line-height: 17px;
    color: #333;
`
